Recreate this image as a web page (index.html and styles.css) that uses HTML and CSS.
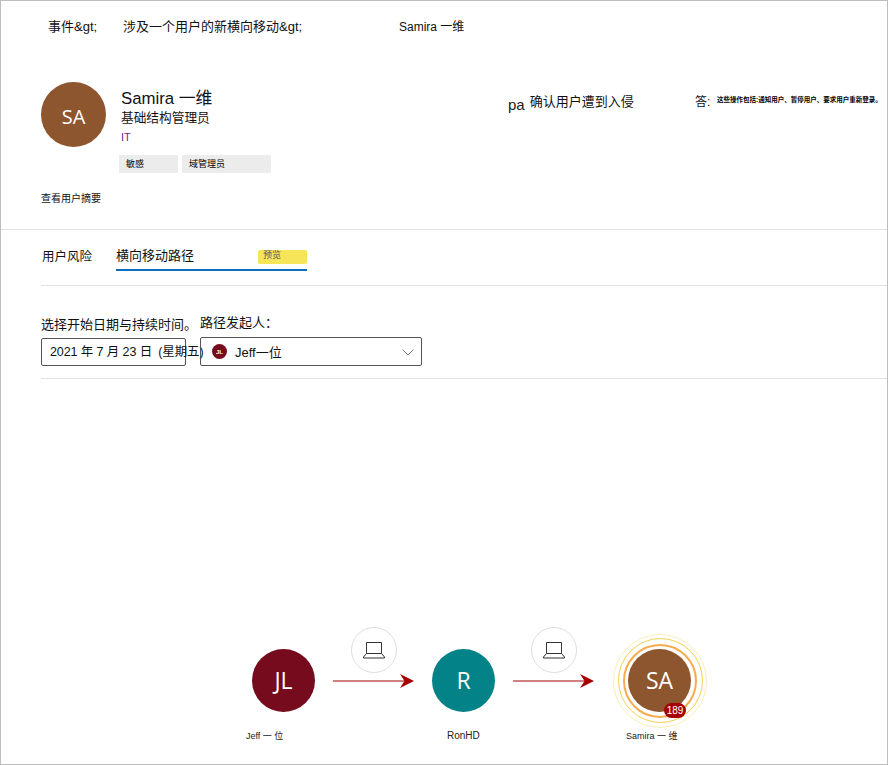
FILE: index.html
```html
<!DOCTYPE html>
<html lang="zh">
<head>
<meta charset="utf-8">
<title>Samira 一维</title>
<link rel="stylesheet" href="styles.css">
</head>
<body>
<div class="frame">
  <nav class="crumbs">
    <span class="crumb-a">事件&amp;gt;</span>
    <span class="crumb-b">涉及一个用户的新横向移动&amp;gt;</span>
    <span class="crumb-c">Samira 一维</span>
  </nav>
  <section class="profile">
    <div class="avatar-lg">SA</div>
    <div class="who">
      <div class="name">Samira 一维</div>
      <div class="role">基础结构管理员</div>
      <div class="dept">IT</div>
      <div class="tags"><span class="tag tag-a">敏感</span><span class="tag tag-b">域管理员</span></div>
    </div>
    <div class="pa"><span class="pa-l">pa</span><span class="pa-t">确认用户遭到入侵</span></div>
    <div class="answer"><span class="answer-l">答:</span><span class="answer-t">这些操作包括:通知用户、暂停用户、要求用户重新登录。</span></div>
  </section>
  <div class="summary">查看用户摘要</div>
  <div class="rule"></div>
  <div class="tabs">
    <span class="tab">用户风险</span>
    <div class="tab-active"><span>横向移动路径</span><span class="preview">预览</span></div>
  </div>
  <div class="rule rule-in"></div>
  <div class="filters">
    <div class="f-date">
      <div class="f-label">选择开始日期与持续时间。</div>
      <div class="date-box"><span class="date-text">2021 年 7 月 23 日&ensp;(星期五)</span></div>
    </div>
    <div class="f-source">
      <div class="f-label">路径发起人：</div>
      <div class="select">
        <span class="mini">JL</span>
        <span class="sel-text">Jeff一位</span>
        <svg class="chev" width="12" height="7" viewBox="0 0 12 7"><path d="M.5.5 6 6l5.500-5.500" fill="none" stroke="#777" stroke-width="1"/></svg>
      </div>
    </div>
  </div>
  <div class="rule rule-in"></div>
  <div class="graph">
    <div class="node n1"><div class="circle c-jl">JL</div></div>
    <div class="label l1">Jeff 一 位</div>
    <div class="arrow a1"><svg width="84" height="16" viewBox="0 0 84 16"><path d="M0 8H76" stroke="#d08080" stroke-width="2"/><path d="M67 1 81 8 67 15 71.500 8Z" fill="#a80000"/></svg></div>
    <div class="device d1"><svg width="24" height="20" viewBox="0 0 24 20"><path d="M4.500 2.500h15v11h-15zM4.500 13.500l-3 3.500v1h21v-1l-3-3.500" fill="none" stroke="#333" stroke-width="1"/></svg></div>
    <div class="node n2"><div class="circle c-r">R</div></div>
    <div class="label l2">RonHD</div>
    <div class="arrow a2"><svg width="84" height="16" viewBox="0 0 84 16"><path d="M0 8H76" stroke="#d08080" stroke-width="2"/><path d="M67 1 81 8 67 15 71.500 8Z" fill="#a80000"/></svg></div>
    <div class="device d2"><svg width="24" height="20" viewBox="0 0 24 20"><path d="M4.500 2.500h15v11h-15zM4.500 13.500l-3 3.500v1h21v-1l-3-3.500" fill="none" stroke="#333" stroke-width="1"/></svg></div>
    <div class="ring r3"></div>
    <div class="ring r2"></div>
    <div class="ring r1"></div>
    <div class="node n3"><div class="circle c-sa">SA</div></div>
    <div class="badge">189</div>
    <div class="label l3">Samira 一 维</div>
  </div>
</div>
</body>
</html>
```
FILE: styles.css
```css
* { box-sizing: border-box; }
html, body { margin: 0; padding: 0; }
body {
  width: 888px;
  height: 765px;
  background: #fff;
  color: #111;
  font-family: "Liberation Sans", "Noto Sans CJK SC", sans-serif;
  overflow: hidden;
}
.frame {
  width: 888px;
  height: 765px;
  border: 1px solid #bdbdbd;
  display: flex;
  flex-direction: column;
  overflow: hidden;
}
.crumbs {
  height: 81px;
  flex: none;
  display: grid;
  grid-template-columns: 47px 75px 276px auto;
  align-items: start;
  padding-top: 17px;
  font-size: 13px;
  line-height: 18px;
}
.crumb-a { grid-column: 2; white-space: nowrap; }
.crumb-b { grid-column: 3; white-space: nowrap; }
.crumb-c { grid-column: 4; white-space: nowrap; font-size: 12px; }
.profile {
  flex: none;
  height: 103px;
  display: flex;
  padding-left: 40px;
}
.avatar-lg {
  width: 65px;
  height: 65px;
  flex: none;
  border-radius: 50%;
  background: #8e562e;
  color: #fff;
  font-family: "Open Sans", sans-serif;
  font-size: 20px;
  padding-top: 3px;
  display: flex;
  align-items: center;
  justify-content: center;
}
.who { width: 387px; margin-left: 15px; flex: none; }
.name { font-size: 16.800px; line-height: 22px; margin-top: 6px; }
.role { font-size: 12.700px; line-height: 18px; margin-top: -1px; }
.dept { font-size: 11px; line-height: 15px; margin-top: 3px; color: #5c2d91; }
.tags { display: flex; gap: 4px; margin-top: 10px; margin-left: -2px; }
.tag {
  height: 18px;
  background: #ececec;
  font-size: 9px;
  line-height: 18px;
  padding-left: 7px;
  color: #000;
}
.tag-a { width: 59px; }
.tag-b { width: 89px; }
.pa { width: 187px; flex: none; margin-top: 9px; white-space: nowrap; display: flex; align-items: flex-start; }
.pa-l { font-size: 15px; line-height: 22px; margin-top: 3px; color: #1a1a1a; }
.pa-t { font-size: 13px; line-height: 22px; margin-left: 5px; }
.answer { margin-top: 11px; display: flex; white-space: nowrap; align-items: flex-start; }
.answer-l { font-size: 12px; line-height: 18px; width: 22px; }
.answer-t { font-size: 6.500px; line-height: 14px; font-weight: 700; color: #000; }
.summary {
  flex: none;
  height: 44px;
  padding-left: 40px;
  padding-top: 6px;
  font-size: 10px;
  line-height: 16px;
}
.rule { flex: none; height: 1px; background: #e1e1e1; }
.rule-in { margin-left: 40px; }
.tabs {
  flex: none;
  height: 55px;
  display: flex;
  padding-left: 41px;
  padding-top: 15px;
  font-size: 13px;
  line-height: 22px;
}
.tab { width: 74px; flex: none; font-size: 12.500px; padding-top: 1px; }
.tab-active {
  width: 191px;
  height: 26px;
  border-bottom: 2px solid #0f6cbd;
  display: flex;
  justify-content: space-between;
}
.preview {
  width: 49px;
  height: 14px;
  margin-top: 5px;
  padding-left: 5px;
  background: #f7e559;
  border-radius: 2px;
  font-size: 9px;
  line-height: 11px;
  color: #555;
}
.filters {
  flex: none;
  height: 92px;
  display: flex;
  padding-left: 40px;
  padding-top: 30px;
}
.f-date { width: 159px; flex: none; }
.f-source { width: 222px; flex: none; margin-top: -2px; }
.f-label { font-size: 13px; line-height: 18px; white-space: nowrap; height: 23px; }
.f-date .f-label { height: 22px; }
.date-box {
  width: 145px;
  height: 28px;
  border: 1px solid #555;
  border-radius: 2px;
  padding-left: 8px;
  font-size: 12.500px;
  line-height: 27px;
  white-space: nowrap;
}
.date-text { letter-spacing: -.1px; }
.select {
  width: 222px;
  height: 29px;
  border: 1px solid #555;
  border-radius: 2px;
  display: flex;
  align-items: center;
  padding: 0 7px 0 11px;
  font-size: 13px;
}
.mini {
  width: 15px;
  height: 15px;
  flex: none;
  border-radius: 50%;
  background: #750b1c;
  color: #fff;
  font-size: 6px;
  font-weight: 700;
  display: flex;
  align-items: center;
  justify-content: center;
}
.sel-text { margin-left: 8px; flex: 1; }
.chev { flex: none; margin-top: 2px; }
.graph { flex: 1; position: relative; }
.circle {
  width: 63px;
  height: 63px;
  padding-bottom: 1px;
  border-radius: 50%;
  color: #fff;
  font-family: "Open Sans", sans-serif;
  font-size: 23px;
  display: flex;
  align-items: center;
  justify-content: center;
}
.c-jl { background: #750b1c; }
.c-r { background: #038387; }
.c-sa { background: #8e562e; }
.node { position: absolute; top: 270px; }
.n1 { left: 251px; }
.n2 { left: 431px; }
.n3 { left: 627px; }
.ring { position: absolute; border-radius: 50%; }
.r1 { left: 622px; top: 265px; width: 74px; height: 74px; border: 2px solid #f7ab4c; }
.r2 { left: 617px; top: 259px; width: 85px; height: 85px; border: 1px solid #f6cf4a; }
.r3 { left: 612px; top: 255px; width: 94px; height: 94px; border: 1px solid #fbeeb8; }
.badge {
  position: absolute;
  left: 663px;
  top: 324px;
  width: 22px;
  height: 15px;
  border-radius: 8px;
  background: #a80000;
  color: #fff;
  font-size: 10px;
  line-height: 15px;
  text-align: center;
}
.device {
  position: absolute;
  top: 248px;
  width: 46px;
  height: 46px;
  border: 1px solid #dedede;
  border-radius: 50%;
  background: #fff;
  display: flex;
  align-items: center;
  justify-content: center;
}
.d1 { left: 350px; }
.d2 { left: 530px; }
.arrow { position: absolute; top: 294px; height: 16px; line-height: 0; }
.a1 { left: 332px; }
.a2 { left: 512px; }
.label { position: absolute; top: 350px; font-size: 9px; line-height: 14px; white-space: nowrap; color: #222; }
.l1 { left: 245px; }
.l2 { left: 446px; font-size: 10px; }
.l3 { left: 625px; }
```
